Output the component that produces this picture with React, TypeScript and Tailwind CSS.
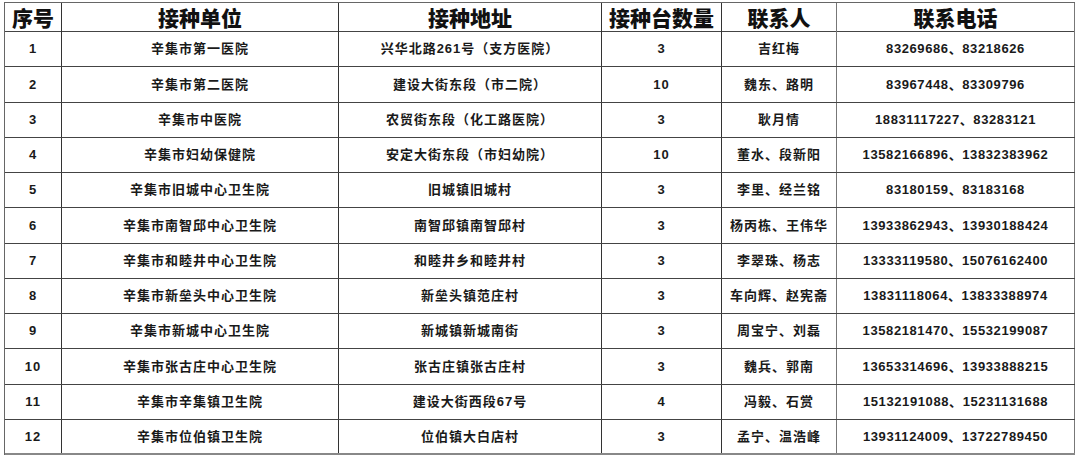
const rows = [
  ['1', '辛集市第一医院', '兴华北路261号（支方医院）', '3', '吉红梅', '83269686、83218626'],
  ['2', '辛集市第二医院', '建设大街东段（市二院）', '10', '魏东、路明', '83967448、83309796'],
  ['3', '辛集市中医院', '农贸街东段（化工路医院）', '3', '耿月情', '18831117227、83283121'],
  ['4', '辛集市妇幼保健院', '安定大街东段（市妇幼院）', '10', '董水、段新阳', '13582166896、13832383962'],
  ['5', '辛集市旧城中心卫生院', '旧城镇旧城村', '3', '李里、经兰铭', '83180159、83183168'],
  ['6', '辛集市南智邱中心卫生院', '南智邱镇南智邱村', '3', '杨丙栋、王伟华', '13933862943、13930188424'],
  ['7', '辛集市和睦井中心卫生院', '和睦井乡和睦井村', '3', '李翠珠、杨志', '13333119580、15076162400'],
  ['8', '辛集市新垒头中心卫生院', '新垒头镇范庄村', '3', '车向辉、赵宪斋', '13831118064、13833388974'],
  ['9', '辛集市新城中心卫生院', '新城镇新城南街', '3', '周宝宁、刘磊', '13582181470、15532199087'],
  ['10', '辛集市张古庄中心卫生院', '张古庄镇张古庄村', '3', '魏兵、郭南', '13653314696、13933888215'],
  ['11', '辛集市辛集镇卫生院', '建设大街西段67号', '4', '冯毅、石赏', '15132191088、15231131688'],
  ['12', '辛集市位伯镇卫生院', '位伯镇大白店村', '3', '孟宁、温浩峰', '13931124009、13722789450'],
]

const headers = ['序号', '接种单位', '接种地址', '接种台数量', '联系人', '联系电话']

const cols = 'grid-cols-[56px_277px_263px_120px_115px_239px]'

export default function App() {
  return (
    <div className="h-[457px] w-[1080px] overflow-hidden bg-white pl-[4px] pt-[2px]" style={{ fontFamily: '"Liberation Sans", "Noto Sans CJK SC", sans-serif' }}>
      <div className="w-[1071px] border-l border-t border-[#666]">
        <div className={`grid ${cols} h-[29px] border-b border-[#444]`}>
          {headers.map((h, i) => (
            <div
              key={h}
              className={`flex items-center justify-center text-[21px] font-black text-[#111] ${i > 0 ? 'border-l border-[#333]' : ''} ${i === 5 ? 'border-r border-[#777]' : ''}`}
            >
              {h}
            </div>
          ))}
        </div>
        {rows.map((r, ri) => (
          <div key={r[0]} className={`grid ${cols} h-[35.25px] border-b ${ri === rows.length - 1 ? 'border-[#888] border-b-2' : 'border-[#444]'}`}>
            {r.map((c, i) => (
              <div
                key={i}
                className={`flex items-center justify-center text-[13px] font-bold ${i === 5 ? 'tracking-[0.6px]' : 'tracking-[1px]'} text-[#1a1a1a] ${i > 0 ? 'border-l border-[#333]' : ''} ${i === 5 ? 'border-r border-[#777]' : ''}`}
              >
                {c}
              </div>
            ))}
          </div>
        ))}
      </div>
    </div>
  )
}
